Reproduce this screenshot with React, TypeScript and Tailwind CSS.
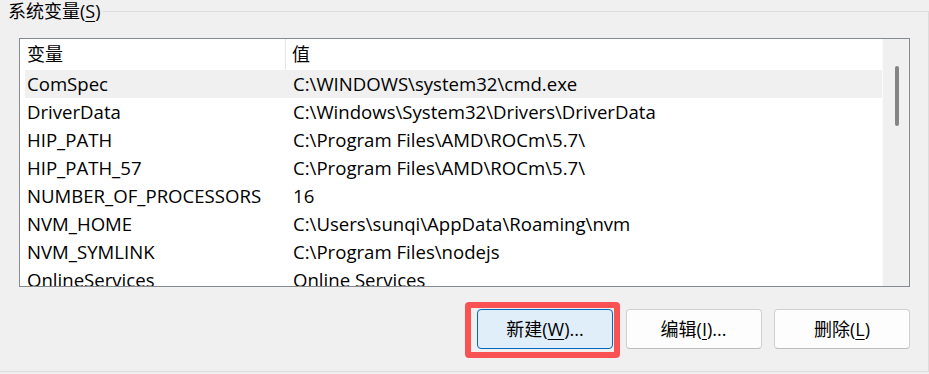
import React from 'react';

const rows = [
    { name: 'ComSpec', value: 'C:\\WINDOWS\\system32\\cmd.exe' },
    { name: 'DriverData', value: 'C:\\Windows\\System32\\Drivers\\DriverData' },
    { name: 'HIP_PATH', value: 'C:\\Program Files\\AMD\\ROCm\\5.7\\' },
    { name: 'HIP_PATH_57', value: 'C:\\Program Files\\AMD\\ROCm\\5.7\\' },
    { name: 'NUMBER_OF_PROCESSORS', value: '16' },
    { name: 'NVM_HOME', value: 'C:\\Users\\sunqi\\AppData\\Roaming\\nvm' },
    { name: 'NVM_SYMLINK', value: 'C:\\Program Files\\nodejs' },
    { name: 'OnlineServices', value: 'Online Services' },
];

const Button = ({ label, hotkey, tail, primary = false }: { label: string; hotkey: string; tail: string; primary?: boolean }) => (
    <button
        className={
            primary
                ? 'w-[136px] h-[40px] rounded-[4px] border border-[#0067c0] bg-[#e0eef9] text-[18px] text-black flex items-center justify-center'
                : 'w-[136px] h-[40px] rounded-[4px] border border-[#d0d0d0] border-b-[#bdbdbd] bg-[#fdfdfd] text-[18px] text-black flex items-center justify-center'
        }
    >
        {label}(<u className="underline-offset-[3px]">{hotkey}</u>){tail}
    </button>
);

export default function App() {
    return (
        <div
            className="relative w-[929px] h-[374px] overflow-hidden bg-[#f0f0f0] text-black"
            style={{ fontFamily: '"Open Sans", "Noto Sans CJK SC", sans-serif' }}
        >
            <div className="ml-[-2px] mt-[11px] w-[931px] h-[361px] border border-[#dcdcdc] pl-[20px] pt-[26px]">
                <div className="w-[891px] h-[249px] border border-[#868a91] bg-white flex">
                    <div className="flex-1 overflow-hidden">
                        <div className="flex h-[31px] items-center text-[18px]">
                            <div className="w-[266px] h-full pl-[7px] flex items-center border-r border-[#e5e5e5]">变量</div>
                            <div className="pl-[6px]">值</div>
                        </div>
                        {rows.map((row, i) => (
                            <div
                                key={row.name}
                                className={
                                    i === 0
                                        ? 'ml-[5px] flex h-[28px] items-center text-[18.6px] bg-[#f0f0f0] whitespace-nowrap'
                                        : 'ml-[5px] flex h-[28px] items-center text-[18.6px] whitespace-nowrap'
                                }
                            >
                                <div className="w-[261px] pl-[2px]">{row.name}</div>
                                <div className="pl-[7px]">{row.value}</div>
                            </div>
                        ))}
                    </div>
                    <div className="w-[27px] h-full bg-[#f0f0f0] border-l border-[#fafafa] flex justify-center pt-[27px] pl-[2px]">
                        <div className="w-[4px] h-[60px] rounded-full bg-[#858585]" />
                    </div>
                </div>
                <div className="w-[891px] mt-[22px] flex justify-end gap-[12.5px]">
                    <Button label="新建" hotkey="W" tail="..." primary />
                    <Button label="编辑" hotkey="I" tail="..." />
                    <Button label="删除" hotkey="L" tail="" />
                </div>
            </div>

            <div className="absolute left-0 top-0 h-[22px] pl-[8px] pr-[2px] bg-[#f0f0f0] text-[18px] leading-[22px]">
                系统变量(<u className="underline-offset-[3px]">S</u>)
            </div>

            <div className="absolute left-[465px] top-[302px] w-[155px] h-[56px] rounded-[4px] border-[6px] border-[#fa5252]" />
        </div>
    );
}
